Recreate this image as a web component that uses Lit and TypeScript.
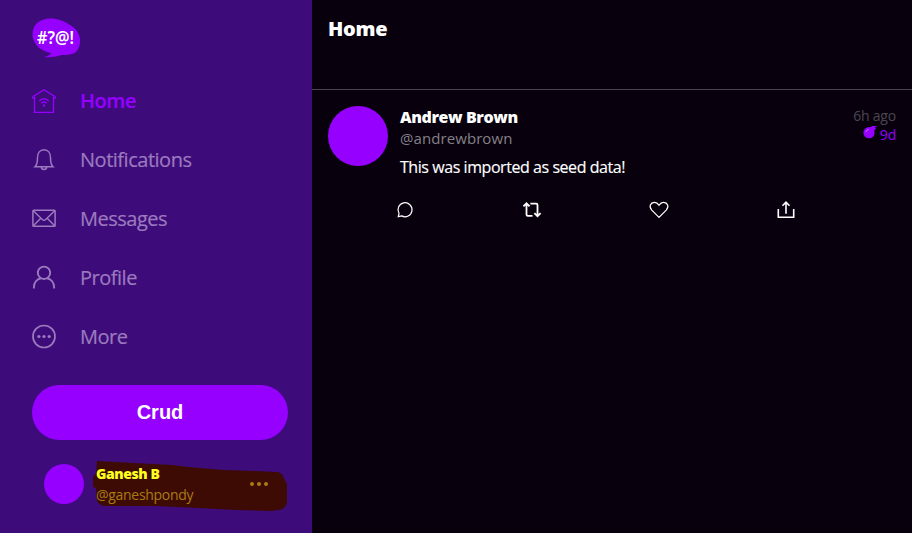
import { LitElement, html, css, svg } from "lit";
import { customElement, property } from "lit/decorators.js";

const navIcons: Record<string, unknown> = {
  home: svg`<path d="M.9 10V7.700L12 .8l11.100 6.900V10M2.500 8V23.300h19V8" stroke-width="1.300"/><path d="M7.200 12q4.800-4.600 9.600 0M9.300 14.300q2.700-2.500 5.400 0" stroke-width="1.500"/><circle cx="12" cy="16.500" r="1.200" fill="currentColor" stroke="none"/>`,
  bell: svg`<path d="M3 18.700c1.900-1.800 2.500-4.500 2.500-8.900C5.500 5 8 1.700 12 1.700s6.500 3.300 6.500 8.100c0 4.400.6 7.100 2.500 8.900zM9.300 19c.2 3.300 5.200 3.300 5.400 0" stroke-width="1.500"/>`,
  mail: svg`<rect x=".9" y="3.300" width="22.200" height="15.900" rx=".8" stroke-width="1.500"/><path d="M1.300 3.800 10.300 12.500q1.700 1.500 3.400 0l9-8.700M1.300 18.700l7.500-7.400M22.700 18.700l-7.500-7.400" stroke-width="1.400"/>`,
  user: svg`<circle cx="12" cy="6.800" r="6.200" stroke-width="1.900"/><path d="M1.900 22.500v-1.200c0-4.500 3-8.100 7-9M22.100 22.500v-1.200c0-4.500-3-8.100-7-9" stroke-width="1.900"/>`,
  more: svg`<circle cx="12" cy="11.500" r="11" stroke-width="1.700"/><g fill="currentColor" stroke="none"><circle cx="6.900" cy="11.500" r="1.600"/><circle cx="12" cy="11.500" r="1.600"/><circle cx="17.200" cy="11.500" r="1.600"/></g>`,
};

const actionIcons = [
  svg`<path d="M3.300 16.700 4 13.300a7 7 0 1 1 2.700 2.600z" stroke-width="1.200"/>`,
  svg`<path d="M1.400 6.400 4.500 3.300l3.100 3.100M4.500 3.600v11q0 1.300 1.300 1.300h4.700M8.400 3.600h5.800q1.300 0 1.300 1.300v11M12.400 13.100l3.100 3.100 3.100-3.100" stroke-width="1.800"/>`,
  svg`<path d="M10 17.300 2.800 10.100C-.6 6.300 1.600 2.700 5.300 2.400c2.200-.1 3.600 1.100 4.700 2.900 1.100-1.800 2.500-3 4.700-2.900 3.700.3 5.900 3.900 2.500 7.700z" stroke-width="1.200"/>`,
  svg`<path d="M2.300 9v8.200h15.400V9M10 13.700V2.400M6.500 5.700 10 2.200l3.500 3.500" stroke-width="1.600"/>`,
];

@customElement("nav-link")
class NavLink extends LitElement {
  @property() icon = "";
  @property() label = "";
  @property({ type: Boolean, reflect: true }) active = false;
  static styles = css`
    :host { display: flex; align-items: center; height: 59px; gap: 24px; color: #9c7abe; font-size: 20px; line-height: 28px; }
    :host([active]) { color: #9500ff; font-weight: 600; }
    svg { width: 24px; height: 24px; fill: none; stroke: currentColor; flex: none; overflow: visible; }
    .label { white-space: nowrap; letter-spacing: -0.48px; -webkit-text-stroke: 0.2px currentColor; }
  `;
  render() {
    return html`<svg viewBox="0 0 24 24">${navIcons[this.icon]}</svg><span class="label">${this.label}</span>`;
  }
}

@customElement("activity-item")
class ActivityItem extends LitElement {
  static styles = css`
    :host { display: flex; gap: 12px; padding: 16px; }
    .avatar { width: 60px; height: 60px; border-radius: 50%; background: #9500ff; flex: none; }
    .body { flex: 1; min-width: 0; }
    .head { display: flex; justify-content: space-between; height: 43px; }
    .name { font-size: 16px; font-weight: 800; line-height: 22px; color: #fff; letter-spacing: -0.4px; }
    .handle { font-size: 15px; line-height: 21px; color: #848087; letter-spacing: 0.08px; }
    .times { text-align: right; font-size: 14px; line-height: 19px; color: #4c4652; letter-spacing: -0.2px; }
    .expires { display: flex; justify-content: flex-end; gap: 2px; color: #9500ff; }
    .bomb { width: 15px; height: 15px; }
    .message { font-size: 16px; line-height: 22px; padding-top: 7px; color: #fff; letter-spacing: -0.44px; -webkit-text-stroke: 0.15px #fff; }
    .actions { display: grid; grid-template-columns: repeat(4, 127px); margin: 22px 0 0 -5px; }
    .actions svg { width: 19px; height: 19px; fill: none; stroke: #fff; overflow: visible; }
  `;
  render() {
    return html`
      <div class="avatar"></div>
      <div class="body">
        <div class="head">
          <div><div class="name">Andrew Brown</div><div class="handle">@andrewbrown</div></div>
          <div class="times">
            <div>6h ago</div>
            <div class="expires">
              <svg class="bomb" viewBox="0 0 15 15"><circle cx="6" cy="7.700" r="5.600" fill="#9500ff"/><path d="m7 2.800 2.200-1.700 5.300-.2-2.600 1.500 1 1.200-2.400 3z" fill="#9500ff"/><path d="M2.700 7.300q.8-2.600 3-2.900" fill="none" stroke="#c66cff"/></svg>
              <span>9d</span>
            </div>
          </div>
        </div>
        <div class="message">This was imported as seed data!</div>
        <div class="actions">${actionIcons.map((i) => html`<svg viewBox="0 0 19 19">${i}</svg>`)}</div>
      </div>`;
  }
}

@customElement("app-root")
class AppRoot extends LitElement {
  static styles = css`
    :host { display: flex; height: 533px; overflow: hidden; background: #08010d; font-family: "Open Sans", "Noto Sans", sans-serif; }
    .side { width: 312px; box-sizing: border-box; padding: 18px 24px 0 32px; background: #3d0c7a; flex: none; }
    .logo { display: block; width: 49px; height: 40px; margin-bottom: 13px; }
    .logo text { font: 600 17px "Noto Sans", sans-serif; fill: #fff; }
    .crud { display: block; width: 256px; height: 55px; margin-top: 19px; padding: 0 0 1px; border: 0; border-radius: 28px; background: #9500ff; color: #fff; font: 700 20px "Liberation Sans", sans-serif; }
    .profile { display: flex; align-items: center; margin: 21px 0 0 12px; gap: 8px; }
    .avatar { width: 40px; height: 40px; border-radius: 50%; background: #9500ff; flex: none; margin-top: -6px; }
    .card { position: relative; width: 196px; height: 51px; flex: none; }
    .smear { display: block; width: 196px; height: 51px; }
    .who { position: absolute; left: 4px; top: 3px; white-space: nowrap; }
    .name { font-size: 14px; font-weight: 800; line-height: 20px; color: #ffff20; letter-spacing: -0.4px; }
    .handle { font-size: 14px; line-height: 22px; color: #a97b12; letter-spacing: -0.3px; }
    .main { flex: 1; min-width: 0; }
    .title { height: 89px; box-sizing: border-box; padding: 15px 16px 0; color: #fff; font-size: 20px; font-weight: 800; line-height: 28px; letter-spacing: -0.3px; }
    .rule { height: 1px; background: #49434d; }
  `;
  render() {
    return html`
      <div class="side">
        <svg class="logo" viewBox="0 0 49 40">
          <path d="M15 .8C22-.5 31 2 38 7c9 5 12 14 9 22-2 6-6 8-16 8-4 0-7 3-19 2 4-.8 6-2 7-4C8 33 1 26 .5 17 .3 8 6 2 15 .8z" fill="#9500ff"/>
          <text x="5" y="26" textLength="37" lengthAdjust="spacingAndGlyphs">#?@!</text>
        </svg>
        <nav>
          <nav-link icon="home" label="Home" active></nav-link>
          <nav-link icon="bell" label="Notifications"></nav-link>
          <nav-link icon="mail" label="Messages"></nav-link>
          <nav-link icon="user" label="Profile"></nav-link>
          <nav-link icon="more" label="More"></nav-link>
        </nav>
        <button class="crud">Crud</button>
        <div class="profile">
          <div class="avatar"></div>
          <div class="card">
            <svg class="smear" viewBox="0 0 196 51">
              <path d="M5 0 42 2 80 4 96 6 132 9 163 10 184 11q5 0 7 4l4 8v19q-2 6-8 7l-8 1-34-1-39-2-42-2H12q-5-1-7-5l-1-13-3-1V15l3-2z" fill="#3d0b03"/>
              <g fill="#a97b12"><circle cx="160" cy="23" r="2"/><circle cx="167" cy="23" r="2"/><circle cx="174" cy="23" r="2"/></g>
            </svg>
            <div class="who"><div class="name">Ganesh B</div><div class="handle">@ganeshpondy</div></div>
          </div>
        </div>
      </div>
      <div class="main">
        <div class="title">Home</div>
        <div class="rule"></div>
        <activity-item></activity-item>
      </div>`;
  }
}
